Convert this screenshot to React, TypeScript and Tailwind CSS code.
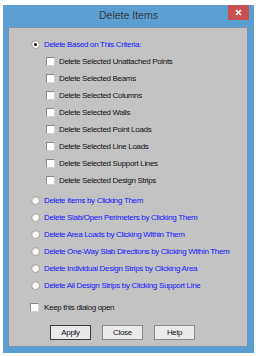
import React from 'react';

const criteria = [
  'Delete Selected Unattached Points',
  'Delete Selected Beams',
  'Delete Selected Columns',
  'Delete Selected Walls',
  'Delete Selected Point Loads',
  'Delete Selected Line Loads',
  'Delete Selected Support Lines',
  'Delete Selected Design Strips',
];

const modes = [
  'Delete Items by Clicking Them',
  'Delete Slab/Open Perimeters by Clicking Them',
  'Delete Area Loads by Clicking Within Them',
  'Delete One-Way Slab Directions by Clicking Within Them',
  'Delete Individual Design Strips by Clicking Area',
  'Delete All Design Strips by Clicking Support Line',
];

function Radio({ checked = false }: { checked?: boolean }) {
  return (
    <span className="w-[9px] h-[9px] rounded-full bg-white border border-[#a0a0a0] shadow-[inset_1px_1px_1px_rgba(0,0,0,0.15)] flex items-center justify-center shrink-0">
      {checked && <span className="w-[3px] h-[3px] rounded-full bg-black" />}
    </span>
  );
}

function Check() {
  return (
    <span className="w-[9px] h-[9px] bg-white border border-[#8a8a8a] border-b-[#d0d0d0] border-r-[#d0d0d0] shrink-0" />
  );
}

export default function App() {
  const txt = "font-['Liberation_Sans',Arial,sans-serif] text-[8px] tracking-[-0.32px] leading-none";
  return (
    <div className="w-[256px] h-[356px] bg-white pt-[5px] pl-[3px]">
      <div className="w-[251px] h-[348px] bg-[#5b9fd2] flex flex-col">
        {/* Title bar */}
        <div className="h-[22px] relative flex items-center justify-center">
          <span className="font-['Liberation_Sans',Arial,sans-serif] text-[10.5px] text-[#2f3a44]">Delete Items</span>
          <div className="absolute right-[5px] top-0 w-[21px] h-[15px] bg-[#c75050] flex items-center justify-center">
            <svg width="7" height="7" viewBox="0 0 7 7">
              <path d="M1 1 L6 6 M6 1 L1 6" stroke="white" strokeWidth="1.6" />
            </svg>
          </div>
        </div>

        {/* Client area */}
        <div className="ml-[5px] mr-[6px] h-[320px] bg-[#c3c3c3] border border-[#7a95ad] flex flex-col pt-[8px]">
          <div className={`h-[17px] flex items-center pl-[22px] gap-[4px] text-[#1414ff] ${txt}`}>
            <Radio checked />
            <span>Delete Based on This Criteria:</span>
          </div>
          {criteria.map((c) => (
            <div key={c} className={`h-[17px] flex items-center pl-[37px] gap-[4px] text-[#111] ${txt}`}>
              <Check />
              <span>{c}</span>
            </div>
          ))}

          <div className="mt-[3px] flex flex-col">
            {modes.map((m) => (
              <div key={m} className={`h-[17px] flex items-center pl-[22px] gap-[4px] text-[#1414ff] ${txt}`}>
                <Radio />
                <span>{m}</span>
              </div>
            ))}
          </div>

          <div className={`mt-[5px] h-[17px] flex items-center pl-[21px] gap-[5px] text-[#111] ${txt}`}>
            <Check />
            <span>Keep this dialog open</span>
          </div>

          <div className="mt-[9px] flex pl-[41px] gap-[11px]">
            <button className={`w-[41px] h-[15px] bg-[#eaeaea] border border-[#3c3c3c] flex items-center justify-center text-[#111] ${txt}`}>
              Apply
            </button>
            <button className={`w-[41px] h-[15px] bg-[#eaeaea] border border-[#8a8a8a] flex items-center justify-center text-[#111] ${txt}`}>
              Close
            </button>
            <button className={`w-[41px] h-[15px] bg-[#eaeaea] border border-[#8a8a8a] flex items-center justify-center text-[#111] ${txt}`}>
              Help
            </button>
          </div>
        </div>
      </div>
    </div>
  );
}
